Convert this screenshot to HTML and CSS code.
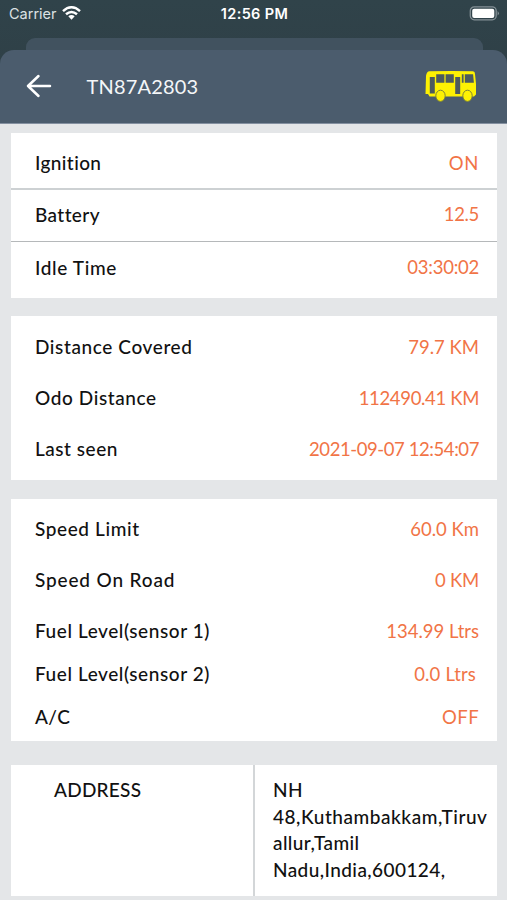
FILE: index.html
```html
<!DOCTYPE html>
<html lang="en">
<head>
<meta charset="utf-8">
<title>TN87A2803</title>
<link rel="stylesheet" href="styles.css">
</head>
<body>
<div class="status">
  <div class="carrier"><span>Carrier</span>
    <svg width="19" height="14" viewBox="0 0 19 14"><g fill="none" stroke="#fff" stroke-width="2.5"><path d="M1 5.1Q9.500 -2.500 18 5.100"/><path d="M4 8.300Q9.500 3.600 15 8.300"/></g><path fill="#fff" d="M6.300 10.300Q9.500 7.700 12.700 10.300L9.500 13.700Z"/></svg>
  </div>
  <div class="clock">12:56 PM</div>
  <svg class="battery" width="31" height="15" viewBox="0 0 31 15"><rect x="1.300" y=".8" width="25.900" height="13" rx="4" fill="none" stroke="#849096" stroke-width="1.300"/><rect x="3.200" y="2.700" width="22.100" height="9.200" rx="2" fill="#fff"/><path d="M28.600 5Q31.200 7.300 28.600 9.600Z" fill="#849096"/></svg>
</div>
<div class="back-sheet"></div>
<header class="header">
  <svg class="arrow" width="26" height="24" viewBox="0 0 26 24"><path d="M24 12H2M12.500 2L2 12L12.500 22" fill="none" stroke="#fff" stroke-width="2.500" stroke-linecap="round" stroke-linejoin="round"/></svg>
  <h1 class="title">TN87A2803</h1>
  <svg class="bus" width="52" height="32" viewBox="0 0 52 32"><path fill="#fdf103" d="M4 1.300Q27 .5 48 1.300Q50 1.500 50 4L51 14V24.500L49 26.500H4.500L3 24H.5L1 6Q1.500 2 4 1.300Z"/><g fill="#4c5a5e"><path d="M4.800 7h5v16.500h-5zM11.200 4.300h8.200v8.400h-8.200zM20.600 4.300h8.200v8.400h-8.200zM30.200 7h5v17h-5zM36.800 4.300h1.800v8.400h-1.800zM39.800 4.300h8.300l.8 8.400h-9.100z"/></g><g fill="#fdf103" stroke="#7d8338" stroke-width="1"><ellipse cx="15.500" cy="25.800" rx="4.700" ry="5.600"/><ellipse cx="42.500" cy="25.800" rx="4.700" ry="5.600"/></g></svg>
</header>
<main class="content">
  <section class="card status-card">
    <div class="row"><span class="label l-ignition">Ignition</span><span class="value v-on">ON</span></div>
    <div class="row"><span class="label l-battery">Battery</span><span class="value v-volts">12.5</span></div>
    <div class="row"><span class="label l-idle">Idle Time</span><span class="value v-idle">03:30:02</span></div>
  </section>
  <section class="card distance-card">
    <div class="row"><span class="label l-covered">Distance Covered</span><span class="value">79.7 KM</span></div>
    <div class="row"><span class="label l-odo">Odo Distance</span><span class="value v-odo">112490.41 KM</span></div>
    <div class="row"><span class="label l-seen">Last seen</span><span class="value v-seen">2021-09-07 12:54:07</span></div>
  </section>
  <section class="card sensor-card">
    <div class="row"><span class="label l-limit">Speed Limit</span><span class="value">60.0 Km</span></div>
    <div class="row"><span class="label l-road">Speed On Road</span><span class="value v-road">0 KM</span></div>
    <div class="row short first-fuel"><span class="label l-fuel">Fuel Level(sensor 1)</span><span class="value">134.99 Ltrs</span></div>
    <div class="row short"><span class="label l-fuel">Fuel Level(sensor 2)</span><span class="value v-fuel2">0.0 Ltrs</span></div>
    <div class="row short"><span class="label l-ac">A/C</span><span class="value v-off">OFF</span></div>
  </section>
  <section class="address-card">
    <div class="address-title">ADDRESS</div>
    <div class="address-text"><span class="a1">NH</span><br><span class="a2">48,Kuthambakkam,Tiruv</span><br><span class="a3">allur,Tamil</span><br><span class="a4">Nadu,India,600124,</span></div>
  </section>
</main>
</body>
</html>
```

FILE: styles.css
```css
* { box-sizing: border-box; }
body {
  margin: 0;
  height: 900px;
  overflow: hidden;
  background: #e4e6e8;
  background-image: linear-gradient(#30434a, #2f4047);
  background-size: 100% 70px;
  background-repeat: no-repeat;
  font-family: Lato, "Liberation Sans", sans-serif;
  font-variant-ligatures: none;
  color: #111;
  white-space: nowrap;
}
.status {
  height: 38px;
  padding: 5px 7px 0 9px;
  display: grid;
  grid-template-columns: 1fr auto 1fr;
  color: #fff;
  font: 14.5px/18px Inter, sans-serif;
}
.carrier { display: flex; gap: 5px; color: #dce1e3; letter-spacing: 0; }
.carrier svg { margin-top: 1px; }
.clock { font-weight: 600; letter-spacing: .35px; }
.battery { justify-self: end; margin-top: 1px; }
.back-sheet { height: 12px; margin: 0 24px 0 26px; border-radius: 9px 9px 0 0; background: #41525f; }
.header {
  height: 74px;
  padding: 0 30px 1px 26px;
  display: flex;
  align-items: center;
  background: #4b5c6d;
  border-radius: 14px 14px 0 0;
  border-bottom: 1px solid #8490a0;
}
.title { margin: 0 0 0 34.5px; font-size: 20px; font-weight: 400; line-height: 26px; letter-spacing: .18px; color: #f4f6f8; }
.bus { margin-left: auto; }
.content { padding: 9px 10px 0 11px; font-size: 19px; }
.card { background: #fff; padding: 0 18px 0 24px; }
.row { display: flex; justify-content: space-between; align-items: center; height: 51px; }
.row.short { height: 43px; }
.first-fuel { margin-top: 4px; }
.label { line-height: 24px; font-weight: 500; }
.value { font-size: 18.5px; line-height: 24px; color: #f17446; }
.status-card { height: 165px; margin-bottom: 18px; padding: 0; }
.status-card .row { padding: 0 18px 0 24px; height: 52px; }
.status-card .row:first-child { height: 57px; padding-top: 4px; border-bottom: 2px solid #cdd1d3; }
.status-card .row:nth-child(2) { border-bottom: 1px solid #b5b8ba; padding-bottom: 1px; }
.distance-card { height: 164px; margin-bottom: 19px; padding-top: 5px; }
.sensor-card { height: 242px; margin-bottom: 24px; padding-top: 4px; }

.l-ignition { letter-spacing: .4px; }
.l-battery { letter-spacing: .4px; }
.l-idle { letter-spacing: .65px; }
.l-covered, .l-odo, .l-limit { letter-spacing: .6px; }
.l-seen { letter-spacing: .52px; }
.l-road { letter-spacing: .85px; }
.l-fuel { letter-spacing: .57px; }
.l-ac { letter-spacing: .4px; }
.v-on { letter-spacing: .6px; }
.v-volts { letter-spacing: -.35px; padding-bottom: 2px; }
.v-idle { letter-spacing: -.25px; padding-bottom: 2px; }
.v-odo { letter-spacing: -.34px; }
.v-seen { letter-spacing: -.42px; }
.v-road { letter-spacing: -.25px; }
.v-fuel2 { letter-spacing: .15px; margin-right: 3px; }
.v-off { letter-spacing: .4px; }

.address-card { display: grid; grid-template-columns: 242px 1fr; gap: 2px; height: 131px; background: #d3d6d8; font-weight: 500; line-height: 26.7px; }
.address-title { background: #fff; padding: 12px 0 0 43px; letter-spacing: .25px; }
.address-text { background: #fff; padding: 12px 0 0 18px; }
.a1 { letter-spacing: .5px; }
.a2 { letter-spacing: .54px; }
.a3, .a4 { letter-spacing: .42px; }
```
